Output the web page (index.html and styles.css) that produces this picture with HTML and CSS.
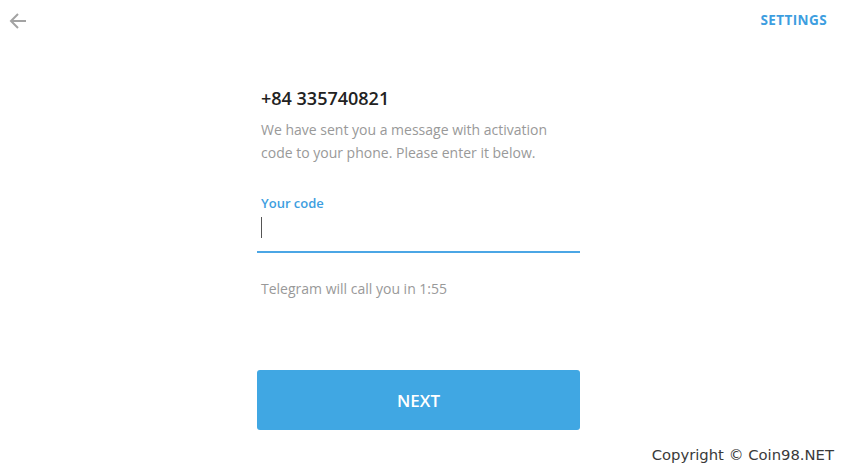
FILE: index.html
```html
<!DOCTYPE html>
<html lang="en">
<head>
    <meta charset="UTF-8">
    <meta name="viewport" content="width=device-width, initial-scale=1.0">
    <title>Telegram - Your code</title>
    <link rel="stylesheet" href="styles.css">
</head>
<body>
    <div class="top-bar">
        <div class="back">
            <svg width="20" height="20" viewBox="0 0 20 20">
                <path d="M18 10H3M10 3L3 10L10 17" fill="none" stroke="#a3a3a3" stroke-width="2"/>
            </svg>
        </div>
        <div class="settings">SETTINGS</div>
    </div>

    <div class="form">
        <div class="phone">+84 335740821</div>
        <p class="desc">We have sent you a message with activation code to your phone. Please enter it below.</p>

        <div class="field">
            <div class="field-label">Your code</div>
            <div class="field-input"><span class="cursor"></span></div>
        </div>

        <p class="call">Telegram will call you in 1:55</p>

        <div class="next-btn">NEXT</div>
    </div>

    <div class="copyright">Copyright © Coin98.NET</div>
</body>
</html>
```

FILE: styles.css
```css
body {
    margin: 0;
    width: 847px;
    height: 470px;
    background-color: #fff;
    font-family: 'Open Sans', sans-serif;
    color: #222;
    position: relative;
    overflow: hidden;
}

.top-bar {
    display: flex;
    justify-content: space-between;
    align-items: center;
    height: 40px;
    padding: 0 20px 0 8px;
}

.back {
    display: flex;
    padding-top: 1px;
}

.settings {
    color: #3d9ee0;
    font-size: 13.5px;
    font-weight: 700;
    letter-spacing: 0.4px;
    padding-bottom: 1px;
}

.form {
    width: 323px;
    margin: 46px 0 0 257px;
}

.phone {
    font-size: 18px;
    font-weight: 600;
    padding-left: 4px;
    line-height: 24px;
}

.desc {
    margin: 8px 0 0;
    padding-left: 4px;
    font-size: 14px;
    line-height: 23px;
    color: #999;
    width: 300px;
}

.field {
    margin-top: 30px;
}

.field-label {
    padding-left: 4px;
    color: #3d9ee0;
    font-size: 13px;
    font-weight: 600;
    line-height: 18px;
}

.field-input {
    height: 34px;
    border-bottom: 2px solid #4ba6e5;
    padding-left: 4px;
}

.cursor {
    display: block;
    width: 1px;
    height: 21px;
    margin-top: 5px;
    background-color: #555;
}

.call {
    margin: 24px 0 0;
    padding-left: 4px;
    font-size: 14px;
    line-height: 24px;
    color: #999;
}

.next-btn {
    margin-top: 69px;
    height: 60px;
    border-radius: 3px;
    background-color: #40a7e3;
    color: #fff;
    font-size: 17px;
    font-weight: 600;
    display: flex;
    justify-content: center;
    align-items: center;
}

.copyright {
    position: absolute;
    right: 13px;
    bottom: 7px;
    font-family: 'DejaVu Sans', sans-serif;
    font-size: 14.8px;
    color: #3a3a3a;
}
```
